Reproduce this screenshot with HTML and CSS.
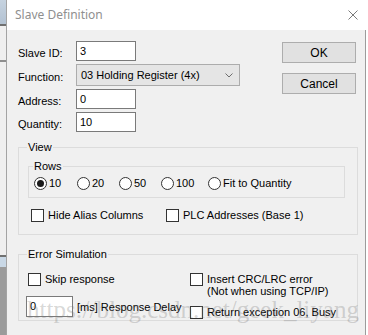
FILE: index.html
```html
<!DOCTYPE html>
<html>
  <head>
    <meta charset="utf-8">
    <title>Slave Definition</title>
    <link rel="stylesheet" href="styles.css">
  </head>
  <body>
    <div class="screen">
      <div class="behind">
        <div class="seg-caption"></div>
        <div class="seg-line"></div>
        <div class="seg-face short"></div>
        <div class="seg-line light"></div>
        <div class="seg-face long"></div>
        <div class="seg-line"></div>
        <div class="seg-tab"></div>
        <div class="seg-dark"></div>
      </div>

      <div class="dialog">
        <div class="titlebar">
          <span class="title">Slave Definition</span>
          <svg class="close" width="10" height="10" viewBox="0 0 10 10">
            <path d="M0.5 0.5 L9.5 9.5 M9.5 0.5 L0.5 9.5" stroke="#7a7a7a" stroke-width="1" fill="none"/>
          </svg>
        </div>

        <div class="body">
          <div class="top">
            <div class="fields">
              <div class="row">
                <span class="label">Slave ID:</span>
                <span class="edit">3</span>
              </div>
              <div class="row">
                <span class="label">Function:</span>
                <span class="combo">
                  <span>03 Holding Register (4x)</span>
                  <svg width="8" height="5" viewBox="0 0 8 5">
                    <path d="M0.5 0.5 L4 4 L7.5 0.5" stroke="#6d6d6d" stroke-width="1" fill="none"/>
                  </svg>
                </span>
              </div>
              <div class="row">
                <span class="label">Address:</span>
                <span class="edit">0</span>
              </div>
              <div class="row">
                <span class="label">Quantity:</span>
                <span class="edit">10</span>
              </div>
            </div>
            <div class="buttons">
              <button class="btn">OK</button>
              <button class="btn">Cancel</button>
            </div>
          </div>

          <fieldset class="group view">
            <legend>View</legend>
            <fieldset class="group rows">
              <legend>Rows</legend>
              <div class="radios">
                <span class="opt w43"><span class="radio checked"></span>10</span>
                <span class="opt w42"><span class="radio"></span>20</span>
                <span class="opt w42"><span class="radio"></span>50</span>
                <span class="opt w47"><span class="radio"></span>100</span>
                <span class="opt"><span class="radio"></span>Fit to Quantity</span>
              </div>
            </fieldset>
            <div class="checks">
              <span class="opt w135"><span class="box"></span>Hide Alias Columns</span>
              <span class="opt"><span class="box"></span>PLC Addresses (Base 1)</span>
            </div>
          </fieldset>

          <fieldset class="group errsim">
            <legend>Error Simulation</legend>
            <div class="err-grid">
              <div class="err-left">
                <span class="opt"><span class="box"></span>Skip response</span>
                <div class="delay">
                  <span class="edit small">0</span>
                  <span>[ms] Response Delay</span>
                </div>
              </div>
              <div class="err-right">
                <span class="opt top-align"><span class="box"></span><span class="two-line">Insert CRC/LRC error<br>(Not when using TCP/IP)</span></span>
                <span class="opt busy"><span class="box"></span>Return exception 06, Busy</span>
              </div>
            </div>
          </fieldset>

          <div class="watermark">https://blog.csdn.net/geek_liyang</div>
        </div>
      </div>
    </div>
  </body>
</html>
```

FILE: styles.css
```css
body {
  margin: 0;
  background: #f0f0f0;
  font-family: "Liberation Sans", Arial, sans-serif;
  font-size: 11px;
  color: #000;
}

.screen {
  display: flex;
  width: 368px;
  height: 335px;
  overflow: hidden;
}

/* the window sitting behind the dialog */
.behind {
  width: 6px;
  display: flex;
  flex-direction: column;
}
.seg-caption {
  height: 24px;
  background: linear-gradient(#c6d3e0, #b3c2d2);
}
.seg-line {
  height: 2px;
  background: #707070;
}
.seg-line.light {
  background: #8e8e8e;
}
.seg-face {
  background: #efefef;
}
.seg-face.short {
  height: 34px;
}
.seg-face.long {
  height: 193px;
}
.seg-tab {
  height: 10px;
  background: #c9d8e6;
}
.seg-dark {
  flex: 1;
  background: #9b9b9b;
}

.dialog {
  flex: 1;
  display: flex;
  flex-direction: column;
  background: #fff;
  border-left: 1px solid #a3a3a3;
}

.titlebar {
  height: 30px;
  display: flex;
  align-items: center;
  justify-content: space-between;
  padding: 0 10px 0 8px;
  background: #fff;
}
.title {
  font-family: "Noto Sans", sans-serif;
  font-size: 12px;
  color: #8f8f8f;
  margin-top: -1px;
}
.close {
  margin-top: -1px;
}

.body {
  position: relative;
  flex: 1;
  background: #f0f0f0;
  margin-right: 2px;
  border-right: 1px solid #9c9c9c;
  padding: 11px 7px 0 11px;
  overflow: hidden;
}

.top {
  display: flex;
  justify-content: space-between;
}
.fields {
  display: flex;
  flex-direction: column;
  gap: 3px;
}
.row {
  display: flex;
  align-items: center;
}
.label {
  width: 58px;
  padding-top: 4px;
}
.edit {
  box-sizing: border-box;
  width: 60px;
  height: 20px;
  background: #fff;
  border: 1px solid #7a7a7a;
  padding: 2px 3px;
  line-height: 14px;
}
.edit.small {
  width: 47px;
  height: 21px;
}
.combo {
  box-sizing: border-box;
  width: 164px;
  height: 22px;
  display: flex;
  align-items: center;
  justify-content: space-between;
  background: #e5e5e5;
  border: 1px solid #acacac;
  padding: 0 6px 0 4px;
}

.buttons {
  display: flex;
  flex-direction: column;
  gap: 10px;
  margin: 1px 2px 0 0;
}
.btn {
  width: 74px;
  height: 21px;
  background: #e1e1e1;
  border: 1px solid #adadad;
  font-family: "Liberation Sans", Arial, sans-serif;
  font-size: 12px;
  color: #000;
  padding: 0;
}

.group {
  margin: 0;
  border: 1px solid #dcdcdc;
  min-width: 0;
}
.group legend {
  padding: 0 1px;
  margin-left: -1px;
  line-height: 14px;
}
.view {
  margin-top: 8px;
  padding: 5px 12px 12px 9px;
}
.rows {
  padding: 3px 5px 7px 5px;
}
.errsim {
  margin-top: 12px;
  padding: 11px 9px 1px 9px;
}

.radios,
.checks {
  display: flex;
  align-items: center;
}
.checks {
  margin: 10px 0 0 3px;
}
.opt {
  display: flex;
  align-items: center;
  gap: 2px;
  height: 14px;
  white-space: nowrap;
}
.w42 { width: 42px; }
.w43 { width: 43px; }
.w47 { width: 47px; }
.w135 { width: 135px; }

.radio {
  box-sizing: border-box;
  width: 13px;
  height: 13px;
  border: 1px solid #333;
  border-radius: 50%;
  background: #fff;
  display: flex;
  align-items: center;
  justify-content: center;
}
.radio.checked::after {
  content: "";
  width: 7px;
  height: 7px;
  border-radius: 50%;
  background: #1b1b1b;
}
.box {
  box-sizing: border-box;
  width: 13px;
  height: 13px;
  border: 1px solid #333;
  background: #fff;
  margin-right: 2px;
}

.err-grid {
  display: grid;
  grid-template-columns: 162px 1fr;
}
.err-left {
  display: flex;
  flex-direction: column;
}
.delay {
  display: flex;
  align-items: center;
  gap: 4px;
  margin: 10px 0 0 -2px;
}
.err-right {
  display: flex;
  flex-direction: column;
}
.opt.top-align {
  align-items: flex-start;
  height: auto;
  margin-top: 1px;
}
.two-line {
  line-height: 12px;
}
.opt.busy {
  margin-top: 8px;
}

.watermark {
  position: absolute;
  left: 20px;
  top: 266px;
  font-family: "Liberation Serif", "Times New Roman", serif;
  font-size: 25px;
  color: rgba(120, 120, 120, 0.3);
  white-space: nowrap;
  pointer-events: none;
}
```
